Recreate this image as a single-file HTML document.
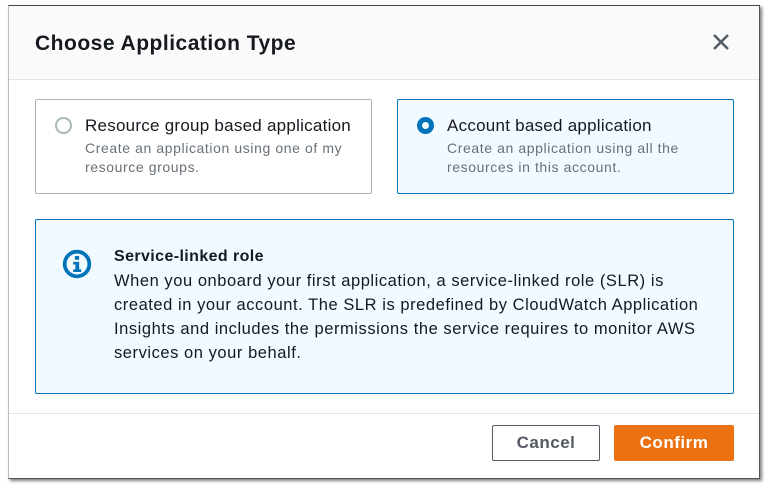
<!DOCTYPE html>
<html><head><style>
body{margin:0;width:772px;height:486px;background:#fff;position:relative;overflow:hidden;font-family:"Liberation Sans",sans-serif;}
.dlg{position:absolute;left:8px;top:5px;width:750px;height:472px;background:#fff;border-left:1px solid #bbb;border-top:1px solid #444;box-shadow:2px 2px 3px rgba(0,0,0,.5);border-right:1px solid #555;border-bottom:1px solid #555;}
.hdr{position:absolute;left:0;top:0;width:750px;height:73px;background:#fafafa;border-bottom:1px solid #e5e5e5;}
.title{position:absolute;left:26px;top:26px;font-size:21px;letter-spacing:0.5px;font-weight:bold;color:#16191f;}
.x{position:absolute;left:702px;top:26px;}
.card{position:absolute;top:93px;width:335px;height:93px;border:1px solid #aab7b8;border-radius:2px;}
.card .t{position:absolute;left:49px;top:16px;font-size:17px;letter-spacing:0.25px;color:#16191f;}
.card .d{position:absolute;left:49px;top:39px;font-size:14px;letter-spacing:0.6px;line-height:19px;color:#687078;}
.rad{position:absolute;left:19px;top:17px;width:17px;height:17px;border-radius:50%;border:2px solid #aab7b8;box-sizing:border-box;}
.sel{border:5px solid #0073bb;}
.info{position:absolute;left:26px;top:213px;width:697px;height:173px;border:1px solid #0073bb;background:#f1faff;border-radius:2px;}
.info .b{position:absolute;left:78px;top:28px;font-size:16px;letter-spacing:0.4px;font-weight:bold;color:#16191f;}
.info .p{position:absolute;left:78px;top:49px;width:598px;font-size:16.5px;letter-spacing:0.55px;line-height:24px;color:#16191f;}
.foot{position:absolute;left:0;top:407px;width:750px;border-top:1px solid #e5e5e5;}
.btn{position:absolute;top:419px;height:36px;box-sizing:border-box;font-size:17px;letter-spacing:0.5px;font-weight:bold;text-align:center;line-height:34px;border-radius:2px;}
</style></head><body>
<div class="dlg">
<div class="hdr"><div class="title">Choose Application Type</div>
<svg class="x" width="20" height="20" viewBox="0 0 20 20"><path d="M3 3L17 17M17 3L3 17" stroke="#545b64" stroke-width="2.5"/></svg></div>
<div class="card" style="left:26px;"><div class="rad"></div><div class="t">Resource group based application</div><div class="d">Create an application using one of my<br>resource groups.</div></div>
<div class="card" style="left:388px;border-color:#0073bb;background:#f1faff;"><div class="rad sel"></div><div class="t">Account based application</div><div class="d">Create an application using all the<br>resources in this account.</div></div>
<div class="info">
<svg style="position:absolute;left:26px;top:29px" width="30" height="30" viewBox="0 0 28 28"><circle cx="14" cy="14" r="11.5" fill="none" stroke="#0073bb" stroke-width="3.5"/><rect x="12" y="6.5" width="4" height="3.5" fill="#0073bb"/><path d="M10.5 12h5.5v7h2v2.5h-7.5V19h2v-4.5h-2z" fill="#0073bb"/></svg>
<div class="b">Service-linked role</div>
<div class="p">When you onboard your first application, a service-linked role (SLR) is created in your account. The SLR is predefined by CloudWatch Application Insights and includes the permissions the service requires to monitor AWS services on your behalf.</div>
</div>
<div class="foot"></div>
<div class="btn" style="left:483px;width:108px;border:1px solid #545b64;color:#545b64;background:#fff;">Cancel</div>
<div class="btn" style="left:605px;width:120px;background:#ec7211;color:#fff;line-height:36px;">Confirm</div>
</div>
</body></html>
